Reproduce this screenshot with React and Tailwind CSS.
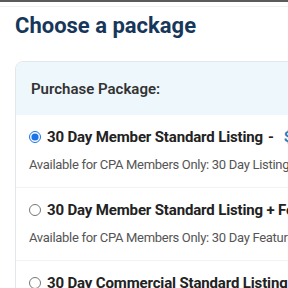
function PackageOption({ title, desc, price, checked }) {
  return (
    <div className="pl-[13px] pt-[10px] pb-[12px] border-b border-[#f2f3f4] whitespace-nowrap">
      <label className="flex items-center gap-[6px] h-[24px] text-[15px] tracking-[-0.15px] font-bold text-[#222]">
        <input
          type="radio"
          name="pkg"
          defaultChecked={checked}
          className="m-0 w-[12px] h-[12px] accent-[#1a73e8]"
        />
        <span>
          {title}
          {price && (
            <>
              <span className="ml-[5px] mr-[10px]">-</span>
              <span className="text-[#1f7fc0]">{price}</span>
            </>
          )}
        </span>
      </label>
      <p className="mt-[6px] text-[13px] tracking-[-0.3px] leading-[20px] text-[#555]">{desc}</p>
    </div>
  )
}

export default function App() {
  return (
    <div className="w-[288px] h-[288px] overflow-hidden bg-white font-['Roboto',sans-serif]">
      <div className="h-[2px] bg-[#5b5b5b]" />
      <div className="mt-[4px] border-t border-[#f1f1f1]" />

      <h1 className="mt-[5px] px-[15px] text-[22px] leading-[28px] font-bold text-[#17375a]">
        Choose a package
      </h1>

      <div className="mt-[21px] ml-[15px] w-[320px] border border-[#e4e7ea] rounded-[8px] overflow-hidden">
        <div className="h-[53px] px-[15px] flex items-center bg-[#eef7fc] text-[15px] leading-[20px] font-semibold text-[#333]">
          Purchase Package:
        </div>

        <PackageOption
          checked
          title="30 Day Member Standard Listing"
          price="$100.00"
          desc="Available for CPA Members Only: 30 Day Listing"
        />
        <PackageOption
          title="30 Day Member Standard Listing + Featured"
          desc="Available for CPA Members Only: 30 Day Featured Listing"
        />
        <PackageOption
          title="30 Day Commercial Standard Listing"
          desc="Available to everyone: 30 Day Listing"
        />
      </div>
    </div>
  )
}
